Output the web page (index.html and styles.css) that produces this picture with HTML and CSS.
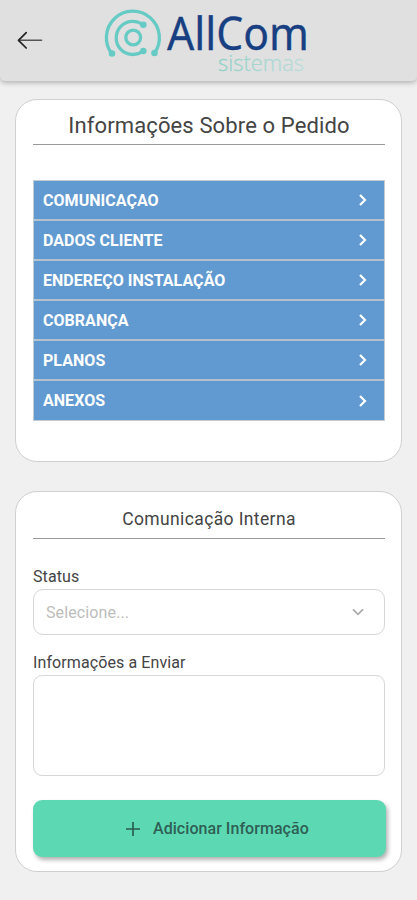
FILE: index.html
```html
<!DOCTYPE html>
<html lang="pt-BR">
<head>
<meta charset="utf-8">
<meta name="viewport" content="width=device-width, initial-scale=1">
<title>AllCom Sistemas</title>
<link rel="stylesheet" href="styles.css">
</head>
<body>
<header class="topbar">
  <svg class="back" width="26" height="20" viewBox="0 0 26 20" fill="none" stroke-linecap="round" stroke-linejoin="round"><path d="M2 10.3H24.5" stroke="#555" stroke-width="1.6"/><path d="M9.200 2.6L1.5 10.3l7.7 7.7" stroke="#222" stroke-width="1.700"/></svg>
  <svg class="logo" width="226" height="74" viewBox="104 6 226 74">
    <defs><linearGradient id="fade" gradientUnits="userSpaceOnUse" x1="218" x2="304" y1="0" y2="0"><stop stop-color="#8fd0c6"/><stop offset="1" stop-color="#bcdcd8"/></linearGradient></defs>
    <g fill="none" stroke="#66cbc4" stroke-width="3.3">
      <path d="M112 54A26.5 26.5 0 1 1 154.5 53"/>
      <path d="M143 24.8A16.6 16.6 0 1 0 143 51"/>
      <circle cx="133.2" cy="37.5" r="7.4"/>
    </g>
    <g fill="#66cbc4"><circle cx="112" cy="53.5" r="3.300"/><circle cx="154.5" cy="53" r="3.300"/><circle cx="143.3" cy="24.8" r="3.300"/><circle cx="143.3" cy="51" r="3.300"/></g>
    <text class="brand" x="167" y="50" textLength="142" lengthAdjust="spacingAndGlyphs">AllCom</text>
    <text class="sub" x="218" y="70.5" textLength="86" lengthAdjust="spacingAndGlyphs" fill="url(#fade)" stroke="url(#fade)" stroke-width=".3">sistemas</text>
  </svg>
</header>
<main class="page">
  <section class="card order">
    <h1 class="title">Informações Sobre o Pedido</h1>
    <ul class="menu">
      <li class="item"><span>COMUNICAÇAO</span><svg class="chev" viewBox="0 0 10 14"><path d="M2 2l5 5-5 5"/></svg></li>
      <li class="item"><span>DADOS CLIENTE</span><svg class="chev" viewBox="0 0 10 14"><path d="M2 2l5 5-5 5"/></svg></li>
      <li class="item"><span>ENDEREÇO INSTALAÇÃO</span><svg class="chev" viewBox="0 0 10 14"><path d="M2 2l5 5-5 5"/></svg></li>
      <li class="item"><span>COBRANÇA</span><svg class="chev" viewBox="0 0 10 14"><path d="M2 2l5 5-5 5"/></svg></li>
      <li class="item"><span>PLANOS</span><svg class="chev" viewBox="0 0 10 14"><path d="M2 2l5 5-5 5"/></svg></li>
      <li class="item"><span>ANEXOS</span><svg class="chev" viewBox="0 0 10 14"><path d="M2 2l5 5-5 5"/></svg></li>
    </ul>
  </section>
  <section class="card internal">
    <h2 class="title small">Comunicação Interna</h2>
    <div class="label status">Status</div>
    <div class="select"><span>Selecione...</span><svg width="14" height="10" viewBox="0 0 14 10" fill="none" stroke="#aaa" stroke-width="1.7"><path d="M2 2.300L7 7.300 12 2.300"/></svg></div>
    <div class="label info">Informações a Enviar</div>
    <div class="area"></div>
    <div class="button"><svg width="14" height="16" viewBox="0 0 14 16" fill="none" stroke="#28584c" stroke-width="1.6"><path d="M0 8h14M7 1v14"/></svg><span>Adicionar Informação</span></div>
  </section>
</main>
</body>
</html>
```
FILE: styles.css
```css
* { box-sizing: border-box; }
body { margin: 0; height: 900px; background: #f0f0f0; font-family: Roboto, "Liberation Sans", sans-serif; color: #444; overflow: hidden; }
.topbar { height: 81px; background: #e0e0e0; border-radius: 0 0 5px 5px; box-shadow: 0 2px 5px rgba(0,0,0,.25); display: flex; align-items: flex-start; padding: 6px 0 0 17px; }
.back { margin: 24px 61px 0 0; flex: none; }
.logo { flex: none; overflow: visible; }
.brand { font: 400 45px "Noto Sans", sans-serif; fill: #173f82; stroke: #173f82; stroke-width: .3; }
.sub { font: 300 22px "Open Sans", sans-serif; }
.page { padding: 18px 15px 0; display: flex; flex-direction: column; gap: 29px; }
.card { width: 387px; background: #fff; border: 1px solid #d0d0d0; border-radius: 22px; padding: 0 16px 0 17px; }
.order { height: 363px; }
.internal { height: 381px; }
.title { margin: 0 0 35px; height: 45px; border-bottom: 1px solid #999; text-align: center; font-weight: 400; font-size: 22px; line-height: 52px; letter-spacing: .13px; white-space: nowrap; }
.small { height: 47px; margin: 0; font-size: 17.5px; line-height: 54px; letter-spacing: .38px; }
.menu { list-style: none; margin: 0; padding: 0; border: 1px solid #c4cbd3; }
.item { height: 40px; background: #619ad1; color: #fff; border-bottom: 2px solid #b5c1ce; display: flex; align-items: center; justify-content: space-between; padding: 0 16px 0 9px; font-weight: 700; font-size: 16px; letter-spacing: .04px; }
.item:last-child { border-bottom: 0; height: 39px; }
.chev { width: 10px; height: 14px; fill: none; stroke: #fff; stroke-width: 2.2; }
.label { font-size: 16px; line-height: 20px; letter-spacing: .1px; }
.status { margin-top: 28px; }
.select { margin-top: 2px; height: 46px; border: 1px solid #d6d6d6; border-radius: 10px; display: flex; align-items: center; justify-content: space-between; padding: 0 19px 0 12px; color: #bdbdbd; font-size: 16px; letter-spacing: .12px; }
.info { margin-top: 18px; }
.area { margin-top: 2px; height: 101px; border: 1px solid #d6d6d6; border-radius: 9px; }
.button { margin-top: 24px; height: 57px; width: 353px; border-radius: 9px; background: #5cd9b3; box-shadow: 2px 3px 4px rgba(0,0,0,.3); display: flex; align-items: center; padding-left: 93px; gap: 13px; color: #2f5f55; font-size: 16px; font-weight: 500; letter-spacing: .05px; }
```
